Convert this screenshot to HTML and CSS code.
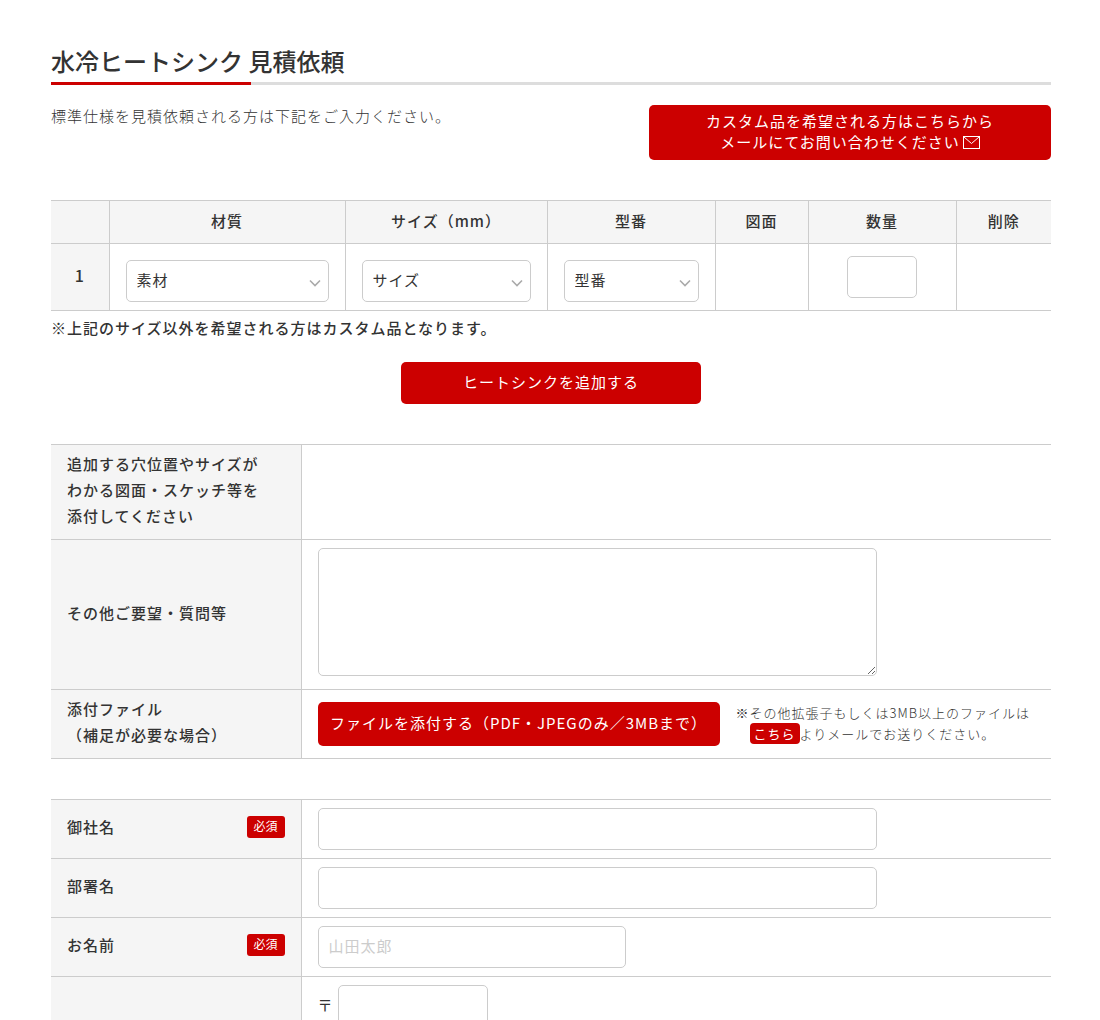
FILE: index.html
```html
<!DOCTYPE html>
<html lang="ja">
<head>
<meta charset="utf-8">
<title>水冷ヒートシンク 見積依頼</title>
<link rel="stylesheet" href="styles.css">
</head>
<body>
<main class="wrap">
  <h1 class="title">水冷ヒートシンク 見積依頼</h1>
  <div class="intro">
    <p class="intro-text">標準仕様を見積依頼される方は下記をご入力ください。</p>
    <a class="btn btn-custom" href="#">カスタム品を希望される方はこちらから<br>メールにてお問い合わせください<svg class="mail" width="17" height="13" viewBox="0 0 17 13" aria-hidden="true"><rect x="0.5" y="0.5" width="16" height="12" fill="none" stroke="#fff"/><path d="M1 1l7.5 6.5L16 1" fill="none" stroke="#fff"/></svg></a>
  </div>

  <table class="spec">
    <colgroup><col class="c1"><col class="c2"><col class="c3"><col class="c4"><col class="c5"><col class="c6"><col class="c7"></colgroup>
    <thead>
      <tr><th></th><th>材質</th><th>サイズ（mm）</th><th>型番</th><th>図面</th><th>数量</th><th>削除</th></tr>
    </thead>
    <tbody>
      <tr>
        <th class="num">1</th>
        <td class="sel-cell"><span class="select"><select><option>素材</option></select><svg class="chev" width="12" height="8" viewBox="0 0 12 8" aria-hidden="true"><path d="M1 1.5l5 5 5-5" fill="none" stroke="#aaa" stroke-width="1.6"/></svg></span></td>
        <td class="sel-cell"><span class="select"><select><option>サイズ</option></select><svg class="chev" width="12" height="8" viewBox="0 0 12 8" aria-hidden="true"><path d="M1 1.5l5 5 5-5" fill="none" stroke="#aaa" stroke-width="1.6"/></svg></span></td>
        <td class="sel-cell"><span class="select"><select><option>型番</option></select><svg class="chev" width="12" height="8" viewBox="0 0 12 8" aria-hidden="true"><path d="M1 1.5l5 5 5-5" fill="none" stroke="#aaa" stroke-width="1.6"/></svg></span></td>
        <td></td>
        <td class="qty-cell"><input class="input qty" type="text"></td>
        <td></td>
      </tr>
    </tbody>
  </table>
  <p class="note">※上記のサイズ以外を希望される方はカスタム品となります。</p>
  <div class="add-row"><a class="btn btn-add" href="#">ヒートシンクを追加する</a></div>

  <table class="form form-a">
    <tr class="row-drawing">
      <th>追加する穴位置やサイズが<br>わかる図面・スケッチ等を<br>添付してください</th>
      <td></td>
    </tr>
    <tr>
      <th>その他ご要望・質問等</th>
      <td><textarea class="input area"></textarea></td>
    </tr>
    <tr>
      <th>添付ファイル<br>（補足が必要な場合）</th>
      <td class="file-cell">
        <div class="file-row">
          <a class="btn btn-file" href="#">ファイルを添付する（PDF・JPEGのみ／3MBまで）</a>
          <p class="file-note">※その他拡張子もしくは3MB以上のファイルは<br><span class="indent"><a class="link-badge" href="#">こちら</a>よりメールでお送りください。</span></p>
        </div>
      </td>
    </tr>
  </table>

  <table class="form form-b">
    <tr>
      <th><div class="label-row">御社名<span class="req">必須</span></div></th>
      <td><input class="input wide" type="text"></td>
    </tr>
    <tr>
      <th>部署名</th>
      <td><input class="input wide" type="text"></td>
    </tr>
    <tr>
      <th><div class="label-row">お名前<span class="req">必須</span></div></th>
      <td><input class="input name" type="text" placeholder="山田太郎"></td>
    </tr>
    <tr>
      <th></th>
      <td><span class="zip"><span class="zip-mark">〒</span><input class="input zip-input" type="text"></span></td>
    </tr>
  </table>
</main>
</body>
</html>
```
FILE: styles.css
```css
html {
  height: 1020px;
  overflow: hidden;
}
body {
  margin: 0;
  color: #333;
  background: #fff;
  font-family: "Noto Sans CJK JP", "Noto Sans", sans-serif;
  font-size: 15px;
  letter-spacing: 1px;
}
.wrap {
  width: 1000px;
  margin-left: 51px;
  padding-top: 44px;
}
.title {
  position: relative;
  margin: 0;
  height: 38px;
  border-bottom: 3px solid #ddd;
  font-size: 24px;
  font-weight: 500;
  line-height: 34px;
  letter-spacing: 0;
}
.title::after {
  content: "";
  position: absolute;
  left: 0;
  bottom: -3px;
  width: 200px;
  height: 3px;
  background: #c00;
}
.intro {
  display: flex;
  justify-content: space-between;
  align-items: flex-start;
  margin-top: 20px;
}
.intro-text {
  margin: 0;
  font-weight: 300;
  line-height: 22px;
}
.btn {
  display: flex;
  align-items: center;
  justify-content: center;
  box-sizing: border-box;
  padding-bottom: 4px;
  border-radius: 5px;
  background: #c00;
  color: #fff;
  text-decoration: none;
}
.btn-custom {
  display: block;
  width: 402px;
  height: 55px;
  padding: 5px 0 0;
  line-height: 21px;
  text-align: center;
}
.mail {
  margin-left: 3px;
  vertical-align: -1px;
}
.spec,
.form {
  width: 1000px;
  border-collapse: collapse;
  table-layout: fixed;
}
.spec {
  margin-top: 40px;
}
.spec th,
.spec td,
.form th,
.form td {
  border: 1px solid #ccc;
  padding: 0;
}
.spec tr > :first-child,
.form tr > :first-child {
  border-left: 0;
}
.spec tr > :last-child,
.form tr > :last-child {
  border-right: 0;
}
.spec th,
.form th {
  background: #f5f5f5;
  font-weight: 500;
}
.c1 { width: 58px; }
.c2 { width: 236px; }
.c3 { width: 202px; }
.c4 { width: 168px; }
.c5 { width: 93px; }
.c6 { width: 148px; }
.c7 { width: 95px; }
.spec thead th {
  height: 43px;
  padding-bottom: 4px;
  box-sizing: border-box;
  text-align: center;
}
.spec tbody tr {
  height: 66px;
}
.spec .num {
  padding-bottom: 4px;
  font-size: 16px;
}
.spec .sel-cell {
  padding: 16px 16px 8px;
}
.select {
  position: relative;
  display: block;
}
.select select {
  display: block;
  box-sizing: border-box;
  width: 100%;
  height: 42px;
  padding: 0 10px 4px;
  border: 1px solid #ccc;
  border-radius: 5px;
  background: #fff;
  color: #333;
  font: inherit;
  letter-spacing: inherit;
  appearance: none;
}
.chev {
  position: absolute;
  right: 8px;
  top: 19px;
  pointer-events: none;
}
.input {
  box-sizing: border-box;
  height: 42px;
  border: 1px solid #ccc;
  border-radius: 5px;
  background: #fff;
  color: #333;
  font: inherit;
  letter-spacing: inherit;
}
.input::placeholder {
  color: #ccc;
}
.spec .qty-cell {
  padding: 8px 0 8px 38px;
  vertical-align: top;
}
.qty {
  display: block;
  width: 70px;
  margin-top: 4px;
}
.note {
  margin: 5px 0 1px;
  font-weight: 500;
  line-height: 24px;
}
.add-row {
  display: flex;
  justify-content: center;
  margin-top: 22px;
}
.btn-add {
  width: 300px;
  height: 42px;
}
.form th {
  box-sizing: border-box;
  width: 250px;
  padding: 0 16px 4px;
  text-align: left;
  line-height: 26px;
}
.form td {
  padding: 8px 16px;
}
.form-a {
  margin-top: 40px;
}
.row-drawing {
  height: 95px;
}
.area {
  display: block;
  width: 559px;
  height: 128px;
  margin-bottom: 5px;
}
.form .file-cell {
  padding: 12px 16px;
}
.file-row {
  display: flex;
  align-items: flex-start;
  gap: 16px;
}
.btn-file {
  flex: none;
  width: 402px;
  height: 44px;
}
.file-note {
  margin: 0;
  font-size: 13px;
  font-weight: 300;
  line-height: 21px;
  white-space: nowrap;
}
.indent {
  padding-left: 14px;
}
.link-badge {
  padding: 1px 4px;
  border-radius: 4px;
  background: #c00;
  color: #fff;
  font-weight: 400;
  text-decoration: none;
}
.form-b {
  margin-top: 40px;
}
.label-row {
  display: flex;
  align-items: center;
  justify-content: space-between;
}
.req {
  width: 38px;
  height: 22px;
  border-radius: 3px;
  background: #c00;
  color: #fff;
  font-size: 12px;
  font-weight: 400;
  line-height: 20px;
  letter-spacing: 0;
  text-align: center;
}
.input.wide {
  display: block;
  width: 559px;
}
.input.name {
  display: block;
  width: 308px;
  padding: 0 10px 4px;
}
.zip {
  display: flex;
  align-items: center;
  gap: 4px;
}
.zip-mark {
  margin-bottom: 4px;
}
.zip-input {
  width: 150px;
}
```
